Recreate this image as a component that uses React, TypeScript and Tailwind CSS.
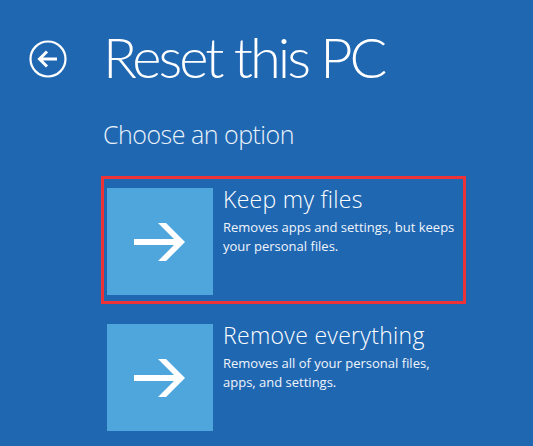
import React from 'react';

const BackIcon: React.FC = () => (
  <svg width="38" height="38" viewBox="0 0 38 38" fill="none" stroke="white">
    <circle cx="19" cy="19" r="17.5" strokeWidth="2.2" />
    <path d="M28 19H11M18 11.5L10.5 19L18 26.5" strokeWidth="3" strokeLinecap="butt" strokeLinejoin="miter" />
  </svg>
);

const TileArrow: React.FC = () => (
  <svg width="52" height="38" viewBox="0 0 52 38">
    <polygon points="0,16 40,16 24,0 32,0 51,19 32,38 24,38 40,22 0,22" fill="white" />
  </svg>
);

type Option = { title: string; lines: string[]; selected?: boolean };

const options: Option[] = [
  { title: 'Keep my files', lines: ['Removes apps and settings, but keeps', 'your personal files.'], selected: true },
  { title: 'Remove everything', lines: ['Removes all of your personal files,', 'apps, and settings.'] },
];

export default function App() {
  return (
    <div className="w-[533px] h-[446px] overflow-hidden bg-[#2067b2] text-white font-['Open_Sans',sans-serif]">
      {/* Header */}
      <div className="flex items-start pl-[29px] pt-[29px]">
        <div className="mt-[11px]">
          <BackIcon />
        </div>
        <h1 className="ml-[36px] text-[56px] leading-[56px] font-light tracking-[-3px] font-['Lato',sans-serif]">Reset this PC</h1>
      </div>

      <div className="pl-[101px]">
        <p className="ml-[2px] mt-[34px] text-[25px] leading-[30px] font-light tracking-[-0.5px] text-[#eaf2fa]">Choose an option</p>

        <div className="mt-[27px] flex flex-col gap-[8px]">
          {options.map((o) => (
            <div
              key={o.title}
              className={`w-[365px] border-[3px] pt-[9px] pb-[6px] px-[3px] flex items-start gap-[10px] ${
                o.selected ? 'border-[#ee3338]' : 'border-transparent'
              }`}
            >
              <div className="w-[106px] h-[107px] bg-[#4ea6dc] flex items-center justify-center shrink-0">
                <TileArrow />
              </div>
              <div className="-mt-[3px]">
                <h2 className="text-[23px] leading-[28px] font-light tracking-[0.3px]">{o.title}</h2>
                <p className="mt-[5px] text-[13px] leading-[19px] text-[#f0f5fb]">
                  {o.lines[0]}
                  <br />
                  {o.lines[1]}
                </p>
              </div>
            </div>
          ))}
        </div>
      </div>
    </div>
  );
}
